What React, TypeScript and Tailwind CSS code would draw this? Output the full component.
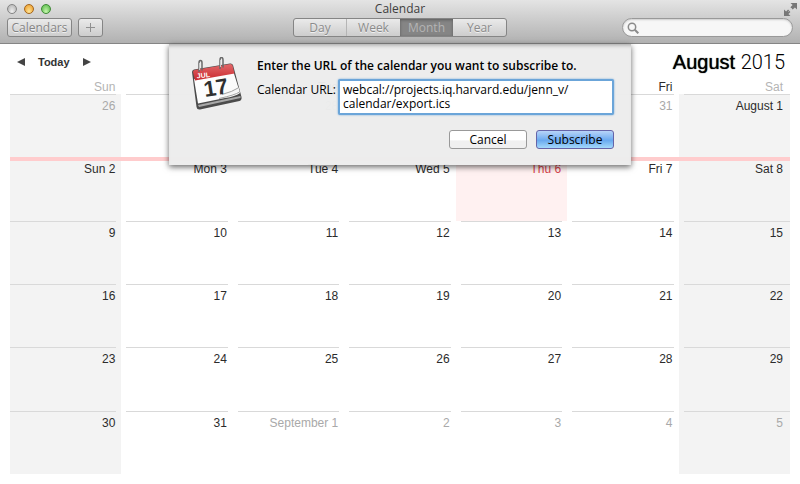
import clsx from "clsx";

type Day = {
    label: string;
    muted?: boolean;
    today?: boolean;
};

const weekdays = ["Sun", "Mon", "Tue", "Wed", "Thu", "Fri", "Sat"];

const views = [
    { name: "Day", width: "w-[53px]" },
    { name: "Week", width: "w-[53px]" },
    { name: "Month", width: "w-[53px]" },
    { name: "Year", width: "w-[53px]" },
];

const range = (from: number, to: number): Day[] =>
    Array.from({ length: to - from + 1 }, (_, i) => ({ label: `${from + i}` }));

const weeks: Day[][] = [
    [...range(26, 31).map((day) => ({ ...day, muted: true })), { label: "August 1" }],
    weekdays.map((name, i) => ({ label: `${name} ${i + 2}`, today: i === 4 })),
    range(9, 15),
    range(16, 22),
    range(23, 29),
    [
        ...range(30, 31),
        { label: "September 1", muted: true },
        ...range(2, 5).map((day) => ({ ...day, muted: true })),
    ],
];

const toolbarButton =
    "h-[19px] rounded-[3px] border border-[#858585] bg-linear-to-b from-[#eaeaea] to-[#cdcdcd] text-[#858585] [text-shadow:0_1px_0_#f0f0f0]";

// insets for the rule on top of each cell; the outer columns run to the edge
const ruleInset = (col: number) =>
    clsx(col === 0 ? "mr-[5px]" : "ml-[5px]", col > 0 && col < 6 && "mr-[5px]");

const textInset = (col: number) => (col === 6 ? "pr-[7px]" : "pr-[6px]");

const TrafficLights = () => (
    <div className="flex items-center gap-[7px] pl-[7px]">
        <span className="size-[10px] rounded-full border border-[#858585] bg-radial-[at_50%_85%] from-[#f2f2f2] to-[#a9a9a9]" />
        <span className="size-[10px] rounded-full border border-[#a5661c] bg-radial-[at_50%_85%] from-[#ffe79a] to-[#ea951f]" />
        <span className="size-[10px] rounded-full border border-[#3f8a36] bg-radial-[at_50%_85%] from-[#c9f7b0] to-[#4db53f]" />
    </div>
);

const ExpandIcon = () => (
    <svg className="size-[13px]" viewBox="0 0 13 13" fill="#777">
        <path d="M6.5 0H13V6.5L10.9 4.4 8.7 6.6 6.4 4.3 8.6 2.1Z" />
        <path d="M0 6.5V13H6.5L4.4 10.9 6.4 8.9 4.1 6.6 2.1 8.6Z" />
        <path d="M4.5 8.5 8.5 4.5" stroke="#cfcfcf" strokeWidth="1" strokeDasharray="1 1" />
    </svg>
);

const CalendarIcon = () => (
    <svg className="h-[54px] w-[52px] shrink-0" viewBox="0 0 52 54">
        <defs>
            <linearGradient id="red" x1="0" y1="0" x2="0" y2="1">
                <stop offset="0" stopColor="#e2686a" />
                <stop offset="1" stopColor="#c9282d" />
            </linearGradient>
            <linearGradient id="paper" x1="0" y1="0" x2="1" y2="1">
                <stop offset="0" stopColor="#fff" />
                <stop offset="0.8" stopColor="#fafafa" />
                <stop offset="1" stopColor="#ddd" />
            </linearGradient>
        </defs>
        <path d="M1 15Q1 13 3 12.500L39 6.500Q41 6 42 8L50.500 40Q51 43 48.500 44L9 52.500Q6 53 5.500 50Z" fill="#4b4b4b" />
        <path d="M7 48 49.500 39V41L8 50Z" fill="#a8a8a8" />
        <path d="M3 22 42.500 15 49 36Q44 39.500 34 41L7 46.500Z" fill="url(#paper)" />
        <path d="M48.500 34Q39 38 30 38.500L44 32.500 47 30Z" fill="#f5f5f5" />
        <path d="M47 31Q42 34.500 31 37.500M48.500 35Q44 38 28 41.500" fill="none" stroke="#8c8c8c" strokeWidth="0.8" />
        <path d="M2 15Q2 13.500 3.500 13L39.500 7Q41 7 41.500 8.500L43.500 16.500 4 23.500Z" fill="url(#red)" />
        <text x="6" y="21.500" transform="rotate(-7 6 21)" fill="#fff" fontFamily="Liberation Sans, sans-serif" fontSize="7" fontWeight="700">
            JUL
        </text>
        <text x="14" y="40" transform="rotate(-9 14 40)" fill="#2f2f2f" fontFamily="Liberation Sans, sans-serif" fontSize="22" fontWeight="700">
            17
        </text>
        <path d="M8 15V6Q8 3.500 9.500 3.500T11 6V13.500M29 12V3Q29 0.500 30.500 0.500T32 3V10.500" fill="none" stroke="#696969" strokeWidth="1.500" />
        <path d="M8.500 13V6M29.500 10V3" fill="none" stroke="#c9c9c9" strokeWidth="1" />
    </svg>
);

const TitleBar = () => (
    <header className="h-11 border-b border-[#858585] bg-linear-to-b from-[#e4e4e4] to-[#b1b1b1] text-[12px]">
        <div className="grid h-[14px] grid-cols-[1fr_auto_1fr] items-center">
            <TrafficLights />
            <h1 className="text-[#3e3e3e]">Calendar</h1>
            <button aria-label="Full screen" className="mr-[3px] justify-self-end">
                <ExpandIcon />
            </button>
        </div>
        <div className="grid grid-cols-[1fr_auto_1fr] items-center px-[7px] pt-1">
            <div className="flex gap-[6px]">
                <button className={clsx(toolbarButton, "w-[65px] leading-[16px]")}>Calendars</button>
                <button aria-label="Add event" className={clsx(toolbarButton, "grid w-[25px] place-items-center")}>
                    <svg className="size-[9px]" viewBox="0 0 9 9" stroke="#909090" strokeWidth="1">
                        <path d="M4.500 0V9M0 4.500H9" />
                    </svg>
                </button>
            </div>
            <div className="flex h-[19px] overflow-hidden rounded-[3px] border border-[#858585] bg-linear-to-b from-[#eaeaea] to-[#cdcdcd]">
                {views.map(({ name, width }) => (
                    <button
                        key={name}
                        aria-pressed={name === "Month"}
                        className={clsx(
                            "leading-[16px]",
                            width,
                            name === "Month"
                                ? "bg-[#858585] text-[#b4b4b4] shadow-[inset_0_1px_3px_#5c5c5c]"
                                : "text-[#8b8b8b] [text-shadow:0_1px_0_#f0f0f0]",
                            name === "Day" && "border-r border-[#b5b5b5]"
                        )}
                    >
                        {name}
                    </button>
                ))}
            </div>
            <label className="flex h-[19px] w-[171px] items-center justify-self-end rounded-full border border-[#999] bg-[#f7f7f7] pl-1 shadow-[inset_0_1px_2px_#ccc]">
                <svg className="size-[12px] shrink-0" viewBox="0 0 12 12" fill="none" stroke="#8b8b8b" strokeWidth="1.500">
                    <circle cx="5" cy="5" r="3.700" />
                    <path d="M7.800 7.800 11.300 11.300" strokeWidth="2" />
                </svg>
                <input type="search" aria-label="Search" className="w-full bg-transparent px-1 outline-none" />
            </label>
        </div>
    </header>
);

const SubscribeSheet = () => (
    <form
        className="absolute top-11 left-1/2 flex w-[462px] -translate-x-1/2 gap-[14px] bg-[#ececec]/97 pt-[13px] pr-[17px] pb-[16px] pl-[22px] text-[12px] text-black shadow-[0_2px_6px_#0009,inset_0_4px_4px_-3px_#0005]"
        onSubmit={(e) => e.preventDefault()}
    >
        <CalendarIcon />
        <div className="flex-1">
            <h2 className="leading-[18px] font-semibold">Enter the URL of the calendar you want to subscribe to.</h2>
            <div className="mt-1 flex justify-between">
                <label htmlFor="url" className="pt-[3px] leading-[16px]">
                    Calendar URL:
                </label>
                <textarea
                    id="url"
                    rows={2}
                    className="h-[36px] w-[276px] resize-none overflow-hidden rounded-[2px] border-2 border-[#6ba5d9] bg-white px-[3px] pt-[2px] leading-[14px] shadow-[0_0_2px_#6ba5d9] outline-none"
                    defaultValue={"webcal://projects.iq.harvard.edu/jenn_v/\ncalendar/export.ics"}
                />
            </div>
            <div className="mt-[15px] flex justify-end gap-[9px]">
                <button
                    type="button"
                    className="h-[19px] w-[78px] rounded-[3px] border border-[#999] bg-linear-to-b from-white from-50% to-[#f0f0f0] to-60% leading-[16px]"
                >
                    Cancel
                </button>
                <button
                    type="submit"
                    className="h-[19px] w-[78px] rounded-[3px] border border-[#6664a8] bg-linear-to-b from-[#b8d4f8] via-[#69a9ef] via-55% to-[#a4d9fb] leading-[16px]"
                >
                    Subscribe
                </button>
            </div>
        </div>
    </form>
);

const MonthView = () => (
    <main className="flex flex-1 flex-col px-[10px] pb-[10px] font-['Liberation_Sans',sans-serif] text-[12px] text-[#2b2b2b]">
        <div className="flex h-[36px] items-center justify-between pr-[5px] pl-[7px]">
            <div className="flex items-center gap-[13px] text-[11px] font-bold text-[#333]">
                <button aria-label="Previous month">
                    <svg className="size-[8px]" viewBox="0 0 8 8" fill="#444">
                        <path d="M8 0V8L0 4Z" />
                    </svg>
                </button>
                <button>Today</button>
                <button aria-label="Next month">
                    <svg className="size-[8px]" viewBox="0 0 8 8" fill="#444">
                        <path d="M0 0V8L8 4Z" />
                    </svg>
                </button>
            </div>
            <h2 className="text-[20px] leading-[24px] text-black">
                <span className="[text-shadow:0_0_1px_#000]">August</span>{" "}
                <span className="font-[Roboto,sans-serif] font-light">2015</span>
            </h2>
        </div>
        <div className="grid flex-1">
            <table className="w-full table-fixed">
                <thead>
                    <tr className="h-[14px]">
                        {weekdays.map((name, col) => (
                            <th
                                key={name}
                                className={clsx(
                                    "p-0 text-right leading-[14px] font-normal",
                                    textInset(col),
                                    (col === 0 || col === 6) && "text-[#b4b4b4]"
                                )}
                            >
                                {name}
                            </th>
                        ))}
                    </tr>
                </thead>
                <tbody>
                    {weeks.map((week, row) => (
                        <tr key={row}>
                            {week.map((day, col) => (
                                <td
                                    key={day.label}
                                    className={clsx(
                                        "p-0 text-right align-top",
                                        (col === 0 || col === 6) && "bg-[#f3f3f3]",
                                        day.today && "bg-[#fff1f1] text-[#d9434a]",
                                        day.muted && "text-[#a9a9a9]"
                                    )}
                                >
                                    {/* the current week gets a thick red rule across every column */}
                                    {row === 1 ? (
                                        <div className="h-1 bg-[#ffcccd]" />
                                    ) : (
                                        <div className={clsx("h-px bg-[#d9d9d9]", ruleInset(col))} />
                                    )}
                                    <div className={clsx("leading-[16px]", textInset(col), row !== 1 && "pt-[3px]")}>
                                        {day.label}
                                    </div>
                                </td>
                            ))}
                        </tr>
                    ))}
                </tbody>
            </table>
        </div>
    </main>
);

const App = () => (
    <div className="relative flex min-h-screen flex-col bg-white font-['Open_Sans',sans-serif]">
        <TitleBar />
        <MonthView />
        <SubscribeSheet />
    </div>
);

export default App;
